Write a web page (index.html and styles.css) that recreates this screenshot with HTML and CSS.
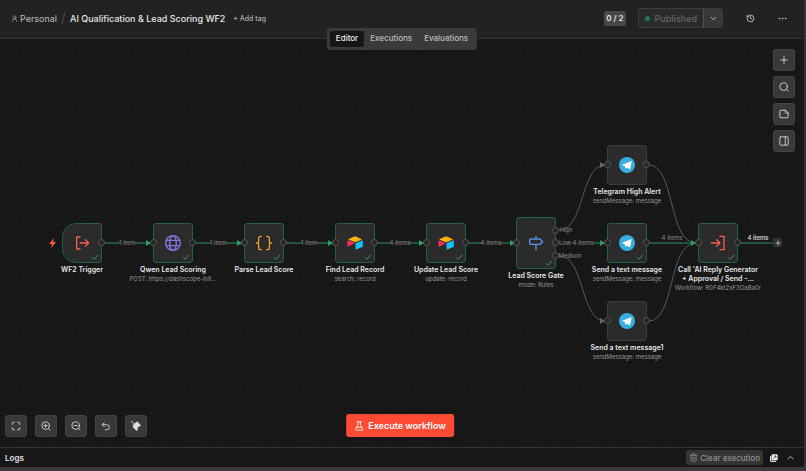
FILE: index.html
```html
<!DOCTYPE html>
<html lang="en">
<head>
  <meta charset="UTF-8" />
  <meta name="viewport" content="width=device-width, initial-scale=1.0" />
  <title>AI Qualification &amp; Lead Scoring WF2</title>
  <link rel="stylesheet" href="styles.css">
</head>
<body>
  <!-- shared icons -->
  <svg class="sprite" aria-hidden="true">
    <symbol id="check" viewBox="0 0 8 8"><path d="M1 4.300 3 6.300 7 2" /></symbol>
    <symbol id="telegram" viewBox="0 0 24 24">
      <circle cx="12" cy="12" r="12" fill="#37aee2" />
      <path d="M4.800 11.800 18 6.400c.7-.2 1.100.1.900 1l-2.200 10.200c-.2.800-.7.900-1.300.6l-3.300-2.500-1.700 1.600c-.4.400-.7.300-.8-.2l-1-3.700-3.700-1.100c-.7-.2-.7-.3-.1-.5z" fill="#fff" />
    </symbol>
    <symbol id="airtable" viewBox="0 0 24 22">
      <path d="M11 1.300 2.500 4.900c-.6.300-.6.900 0 1.100l8.500 3.500c.8.300 1.600.3 2.300 0l8.400-3.500c.6-.2.600-.8 0-1.100L13.200 1.300c-.7-.3-1.500-.3-2.200 0z" fill="#fcb400" />
      <path d="M12.800 11.600V20.200c0 .5.400.8.900.6l9.500-3.800c.3-.1.500-.3.500-.6V7.900c0-.5-.4-.8-.9-.6l-9.500 3.700c-.3.100-.5.300-.5.600z" fill="#18bfff" />
      <path d="M10.800 12 2 16.300c-.6.300-1.400 0-1.400-.6V8c0-.6.600-1 1.200-.7l8.700 3.500c.8.300.9.900.3 1.200z" fill="#f82b60" />
    </symbol>
  </svg>

  <div class="app">
    <header class="header">
      <a class="project" href="#">
        <svg class="icon tiny" viewBox="0 0 24 24"><circle cx="12" cy="8" r="5" /><path d="M4 22a8 8 0 0 1 16 0" /></svg>
        Personal
      </a>
      <span class="slash"></span>
      <h1>AI Qualification &amp; Lead Scoring WF2</h1>
      <button class="add-tag">+ Add tag</button>
      <div class="actions">
        <span class="counter">0 / 2</span>
        <div class="publish">
          <button class="published" disabled><i class="dot"></i>Published</button>
          <button class="publish-more" aria-label="Publish options"><svg class="icon small" viewBox="0 0 24 24"><path d="m6 9 6 6 6-6" /></svg></button>
        </div>
        <button class="plain" aria-label="History"><svg class="icon small" viewBox="0 0 24 24"><path d="M3 12a9 9 0 1 0 9-9 9.700 9.700 0 0 0-6.700 2.700L3 8" /><path d="M3 3v5h5M12 7v5l4 2" /></svg></button>
        <button class="plain" aria-label="More"><svg class="icon small" viewBox="0 0 24 24"><circle cx="4" cy="12" r="1" /><circle cx="12" cy="12" r="1" /><circle cx="20" cy="12" r="1" /></svg></button>
      </div>
      <nav class="tabs">
        <button class="active">Editor</button>
        <button>Executions</button>
        <button>Evaluations</button>
      </nav>
    </header>

    <main class="canvas">
      <div class="flow">
        <svg class="edges" viewBox="0 0 806 408">
          <defs>
            <marker id="arrow" markerUnits="userSpaceOnUse" markerWidth="6" markerHeight="6" refX="5" refY="3" orient="auto"><path d="M0 0 5 3 0 6z" fill="#2da063" /></marker>
            <marker id="arrow-grey" markerUnits="userSpaceOnUse" markerWidth="6" markerHeight="6" refX="5" refY="3" orient="auto"><path d="M0 0 5 3 0 6z" fill="#666" /></marker>
          </defs>
          <g class="idle">
            <path d="M559 191C585 191 580 126 605 126" marker-end="url(#arrow-grey)" />
            <path d="M559 217C585 217 580 282 605 282" marker-end="url(#arrow-grey)" />
            <path d="M649 126C675 126 668 204 696 204" />
            <path d="M649 282C675 282 668 204 696 204" />
          </g>
          <g class="done">
            <path d="M104 204H120M134 204H151" marker-end="url(#arrow)" />
            <path d="M195 204H211M225 204H242" marker-end="url(#arrow)" />
            <path d="M286 204H302M316 204H333" marker-end="url(#arrow)" />
            <path d="M377 204H391M409 204H424" marker-end="url(#arrow)" />
            <path d="M468 204H482M500 204H515" marker-end="url(#arrow)" />
            <path d="M593 204H605" marker-end="url(#arrow)" />
            <path d="M649 204H696" marker-end="url(#arrow)" />
            <path d="M740 204H773" />
          </g>
          <g class="edge-text">
            <text x="127" y="206">1 item</text>
            <text x="218" y="206">1 item</text>
            <text x="309" y="206">1 item</text>
            <text x="400" y="206">4 items</text>
            <text x="491" y="206">4 items</text>
            <text x="583" y="206">4 items</text>
            <text x="566" y="193">High</text>
            <text x="565" y="206">Low</text>
            <text x="570" y="219">Medium</text>
            <text x="672" y="201">4 items</text>
            <text class="bright" x="758" y="201">4 items</text>
          </g>
          <path class="strike" d="M120 204H134M211 204H225M302 204H316M391 204H409M482 204H500M559 204H593M559 191H570M559 217H578" />
          <path class="bolt" d="M54 199 49 205H52L51 209 56 203H53z" />
        </svg>

        <article class="node trigger done-node n1">
          <div class="box">
            <svg class="glyph red" viewBox="0 0 24 24"><path d="M9 3H4v18h5M9 12h13M17 7l5 5-5 5" /></svg>
            <i class="port out"></i><svg class="tick"><use href="#check" /></svg>
          </div>
          <h2>WF2 Trigger</h2>
        </article>

        <article class="node done-node n2">
          <div class="box">
            <svg class="glyph purple" viewBox="0 0 24 24"><circle cx="12" cy="12" r="11" /><ellipse cx="12" cy="12" rx="5" ry="11" /><path d="M2 8h20M2 16h20" /></svg>
            <i class="port in"></i><i class="port out"></i><svg class="tick"><use href="#check" /></svg>
          </div>
          <h2>Qwen Lead Scoring</h2>
          <p>POST: https://dashscope-intl...</p>
        </article>

        <article class="node done-node n3">
          <div class="box">
            <svg class="glyph orange" viewBox="0 0 24 24"><path d="M8 2H7a3 3 0 0 0-3 3v4a3 3 0 0 1-3 3 3 3 0 0 1 3 3v4a3 3 0 0 0 3 3h1M16 2h1a3 3 0 0 1 3 3v4a3 3 0 0 0 3 3 3 3 0 0 0-3 3v4a3 3 0 0 1-3 3h-1" /></svg>
            <i class="port in"></i><i class="port out"></i><svg class="tick"><use href="#check" /></svg>
          </div>
          <h2>Parse Lead Score</h2>
        </article>

        <article class="node done-node n4">
          <div class="box">
            <svg class="glyph"><use href="#airtable" /></svg>
            <i class="port in"></i><i class="port out"></i><svg class="tick"><use href="#check" /></svg>
          </div>
          <h2>Find Lead Record</h2>
          <p>search: record</p>
        </article>

        <article class="node done-node n5">
          <div class="box">
            <svg class="glyph"><use href="#airtable" /></svg>
            <i class="port in"></i><i class="port out"></i><svg class="tick"><use href="#check" /></svg>
          </div>
          <h2>Update Lead Score</h2>
          <p>update: record</p>
        </article>

        <article class="node gate done-node n6">
          <div class="box">
            <svg class="glyph blue" viewBox="0 0 24 24"><path d="M12 2v4M12 14v8M4 6h14l4 4-4 4H4a1.500 1.500 0 0 1-1.500-1.500v-5A1.500 1.500 0 0 1 4 6z" /></svg>
            <i class="port in"></i><i class="port out high"></i><i class="port out"></i><i class="port out medium"></i><svg class="tick"><use href="#check" /></svg>
          </div>
          <h2>Lead Score Gate</h2>
          <p>mode: Rules</p>
        </article>

        <article class="node n7">
          <div class="box">
            <svg class="glyph"><use href="#telegram" /></svg>
            <i class="port in"></i><i class="port out"></i>
          </div>
          <h2>Telegram High Alert</h2>
          <p>sendMessage: message</p>
        </article>

        <article class="node done-node n8">
          <div class="box">
            <svg class="glyph"><use href="#telegram" /></svg>
            <i class="port in"></i><i class="port out"></i><svg class="tick"><use href="#check" /></svg>
          </div>
          <h2>Send a text message</h2>
          <p>sendMessage: message</p>
        </article>

        <article class="node n9">
          <div class="box">
            <svg class="glyph"><use href="#telegram" /></svg>
            <i class="port in"></i><i class="port out"></i>
          </div>
          <h2>Send a text message1</h2>
          <p>sendMessage: message</p>
        </article>

        <article class="node done-node n10">
          <div class="box">
            <svg class="glyph red" viewBox="0 0 24 24"><path d="M15 2h6v20h-6M2 12h13M10 7l5 5-5 5" /></svg>
            <i class="port in"></i><i class="port out"></i><svg class="tick"><use href="#check" /></svg>
          </div>
          <h2>Call 'AI Reply Generator<br>+ Approval / Send -...</h2>
          <p>Workflow: R0F4kt2xF3OaBa0r</p>
        </article>

        <button class="add-next" aria-label="Add next node"><svg class="icon" viewBox="0 0 24 24"><path d="M12 4v16M4 12h16" /></svg></button>
      </div>

      <div class="side-tools">
        <button class="tool" aria-label="Add node"><svg class="icon" viewBox="0 0 24 24"><path d="M12 4v16M4 12h16" /></svg></button>
        <button class="tool" aria-label="Search"><svg class="icon" viewBox="0 0 24 24"><circle cx="11" cy="11" r="9" /><path d="m22 22-4.500-4.500" /></svg></button>
        <button class="tool" aria-label="Add note"><svg class="icon" viewBox="0 0 24 24"><path d="M15 3H4a2 2 0 0 0-2 2v14a2 2 0 0 0 2 2h16a2 2 0 0 0 2-2v-9zM15 3v5a2 2 0 0 0 2 2h5" /></svg></button>
        <button class="tool" aria-label="Toggle panel"><svg class="icon" viewBox="0 0 24 24"><rect x="2" y="2" width="20" height="20" rx="2" /><path d="M15 2v20" /></svg></button>
      </div>

      <div class="bottom-tools">
        <button class="tool" aria-label="Fit view"><svg class="icon" viewBox="0 0 24 24"><path d="M8 3H5a2 2 0 0 0-2 2v3M21 8V5a2 2 0 0 0-2-2h-3M3 16v3a2 2 0 0 0 2 2h3M16 21h3a2 2 0 0 0 2-2v-3" /></svg></button>
        <button class="tool" aria-label="Zoom in"><svg class="icon" viewBox="0 0 24 24"><circle cx="11" cy="11" r="9" /><path d="m22 22-4.500-4.500M11 7v8M7 11h8" /></svg></button>
        <button class="tool" aria-label="Zoom out"><svg class="icon" viewBox="0 0 24 24"><circle cx="11" cy="11" r="9" /><path d="m22 22-4.500-4.500M7 11h8" /></svg></button>
        <button class="tool" aria-label="Undo"><svg class="icon" viewBox="0 0 24 24"><path d="M8 14 3 9l5-5M3 9h11a6 6 0 0 1 0 12h-4" /></svg></button>
        <button class="tool" aria-label="Tidy up"><svg class="icon broom" viewBox="0 0 24 24"><path d="M1 1 9 8M6 9l9-7 8 9-7 3-2 9-8-7z" /></svg></button>
      </div>

      <button class="execute">
        <svg class="icon" viewBox="0 0 24 24"><path d="M7 2h10M9 2v7L3 20a1.500 1.500 0 0 0 1 2h16a1.500 1.500 0 0 0 1-2L15 9V2M6 15h12" /></svg>
        Execute workflow
      </button>
    </main>

    <footer class="logs">
      <h3>Logs</h3>
      <button class="clear"><svg class="icon small" viewBox="0 0 24 24"><path d="M3 6h18M5 6v14a2 2 0 0 0 2 2h10a2 2 0 0 0 2-2V6M8 6V3a1 1 0 0 1 1-1h6a1 1 0 0 1 1 1v3M10 11v6M14 11v6" /></svg>Clear execution</button>
      <button class="plain" aria-label="Pop out"><svg class="popout" viewBox="0 0 24 24"><path d="M2 6v14a2 2 0 0 0 2 2h14" fill="none" stroke="#ddd" stroke-width="4" /><rect x="5" y="1" width="18" height="18" rx="3" fill="#eee" /><path d="m10 14 8-8M12 6h6v6" fill="none" stroke="#222" stroke-width="2" /></svg></button>
      <button class="plain" aria-label="Open logs"><svg class="icon small" viewBox="0 0 24 24"><path d="m5 16 7-7 7 7" /></svg></button>
    </footer>
  </div>
</body>
</html>
```
FILE: styles.css
```css
* { box-sizing: border-box; }
body {
  margin: 0;
  background: #171717;
  color: #e6e6e6;
  font-family: Inter, "Liberation Sans", sans-serif;
  font-size: 9px;
}
h1, h2, h3, p { margin: 0; }
button {
  font: inherit;
  color: inherit;
  padding: 0;
  border: 0;
  background: none;
  cursor: pointer;
}
.sprite {
  position: absolute;
  width: 0;
  height: 0;
}
.app {
  display: flex;
  flex-direction: column;
  height: 100vh;
  border-right: 2px solid #343434;
  border-bottom: 4px solid #3a3a3a;
}
.icon {
  display: block;
  width: 10px;
  height: 10px;
  fill: none;
  stroke: currentColor;
  stroke-width: 2;
  stroke-linecap: round;
  stroke-linejoin: round;
}
.icon.small { width: 9px; height: 9px; }
.icon.tiny { width: 7px; height: 7px; }

/* header */
.header {
  position: relative;
  display: flex;
  align-items: center;
  height: 39px;
  padding: 0 15px 2px 11px;
  background: #222;
  border-bottom: 1px solid #353535;
}
.project {
  display: flex;
  align-items: center;
  gap: 2px;
  color: #bdbdbd;
  text-decoration: none;
}
.slash {
  width: 1px;
  height: 12px;
  margin: 0 6px;
  background: #4a4a4a;
  transform: rotate(15deg);
}
h1 {
  font-size: 9px;
  font-weight: 500;
}
.add-tag {
  margin-left: 8px;
  font-size: 7px;
  font-weight: 500;
  color: #b0b0b0;
}
.actions {
  display: flex;
  align-items: center;
  margin-left: auto;
}
.counter {
  padding: 0 2px;
  line-height: 15px;
  font-size: 8px;
  font-weight: 600;
  background: #484848;
  border-radius: 2px;
}
.publish {
  display: flex;
  height: 20px;
  margin: 0 20px 0 12px;
  border: 1px solid #3c3c3c;
  border-radius: 3px;
  overflow: hidden;
}
.published {
  display: flex;
  align-items: center;
  gap: 5px;
  padding: 0 6px;
  color: #686868;
  font-weight: 500;
  background: #2b2b2b;
  cursor: default;
}
.dot {
  width: 5px;
  height: 5px;
  border-radius: 50%;
  background: #207a4c;
}
.publish-more {
  width: 19px;
  display: grid;
  place-items: center;
  background: #383838;
  border-left: 1px solid #505050;
}
.actions .plain { width: 14px; }
.actions .plain + .plain { margin-left: 18px; }
.plain {
  display: grid;
  place-items: center;
  color: #ddd;
}
.tabs {
  position: absolute;
  top: 28px;
  left: 50%;
  transform: translateX(-50%);
  z-index: 2;
  display: flex;
  padding: 3px;
  background: #3a3a3a;
  border-radius: 3px;
}
.tabs button {
  height: 16px;
  padding: 0 6px 2px;
  border-radius: 2px;
  font-size: 8px;
  font-weight: 500;
  color: #bcbcbc;
}
.tabs .active {
  color: #eee;
  background: #161616;
}

/* canvas */
.canvas {
  position: relative;
  flex: 1;
  overflow: hidden;
  background: #171717 radial-gradient(circle, #1d1d1d 1px, transparent 1px) 0 0 / 7px 7px;
}
.flow {
  position: absolute;
  top: 0;
  left: 0;
  width: 806px;
  height: 408px;
}
.edges {
  display: block;
  width: 806px;
  height: 408px;
}
.edges .idle, .edges .done {
  fill: none;
  stroke: #5a5a5a;
  stroke-width: 1;
}
.edges .done { stroke: #2b935b; }
.edge-text {
  fill: #868686;
  font-size: 6px;
  text-anchor: middle;
}
.edge-text .bright {
  fill: #e0e0e0;
  font-weight: 500;
}
.strike {
  fill: none;
  stroke: #5a5a5a;
  stroke-opacity: 0.5;
}
.bolt { fill: #ff5a45; }
.node {
  position: absolute;
  top: 184px;
  width: 120px;
  margin-left: -60px;
  display: flex;
  flex-direction: column;
  align-items: center;
  text-align: center;
}
.n1 { left: 82px; }
.n2 { left: 173px; }
.n3 { left: 264px; }
.n4 { left: 355px; }
.n5 { left: 446px; }
.n6 { left: 536px; }
.n7 { left: 627px; top: 106px; }
.n8 { left: 627px; }
.n9 { left: 627px; top: 262px; }
.n10 { left: 718px; }
.box {
  position: relative;
  display: grid;
  place-items: center;
  width: 40px;
  height: 40px;
  background: #2b2b2b;
  border: 1px solid #3c3c3c;
  border-radius: 3px;
}
.done-node .box { border-color: #22613f; }
.trigger .box { border-radius: 14px 3px 3px 14px; }
.node.gate { top: 178px; }
.gate .box { height: 52px; }
.node h2 {
  margin-top: 2px;
  font-size: 7px;
  line-height: 9px;
  font-weight: 600;
  white-space: nowrap;
}
.node p {
  font-size: 6px;
  line-height: 9px;
  color: #969696;
  white-space: nowrap;
}
.glyph {
  width: 16px;
  height: 16px;
  fill: none;
  stroke-width: 2;
  stroke-linecap: round;
  stroke-linejoin: round;
}
.red { stroke: #f0614f; }
.purple { stroke: #8277e0; }
.orange { stroke: #f29a2b; }
.blue { stroke: #5b94e6; }
.port {
  position: absolute;
  top: 50%;
  width: 7px;
  height: 7px;
  margin-top: -4px;
  background: #262626;
  border: 1px solid #565656;
  border-radius: 50%;
}
.port.in { left: -4px; }
.port.out { right: -4px; }
.port.high { top: 25%; }
.port.medium { top: 75%; }
.tick {
  position: absolute;
  right: 2px;
  bottom: 1px;
  width: 8px;
  height: 8px;
  fill: none;
  stroke: #2f9a60;
  stroke-width: 1;
}
.add-next {
  position: absolute;
  left: 773px;
  top: 199px;
  width: 9px;
  height: 9px;
  display: grid;
  place-items: center;
  color: #ccc;
  background: #333;
  border-radius: 2px;
}
.add-next .icon { width: 6px; height: 6px; stroke-width: 3; }

/* floating controls */
.tool {
  display: grid;
  place-items: center;
  width: 22px;
  height: 22px;
  color: #dedede;
  background: #393939;
  border: 1px solid #434343;
  border-radius: 3px;
}
.side-tools {
  position: absolute;
  top: 10px;
  right: 9px;
  display: grid;
  gap: 5px;
}
.bottom-tools {
  position: absolute;
  left: 5px;
  bottom: 10px;
  display: flex;
  gap: 8px;
}
.broom { fill: currentColor; }
.execute {
  position: absolute;
  left: 50%;
  bottom: 10px;
  transform: translateX(-50%);
  display: flex;
  align-items: center;
  gap: 4px;
  height: 23px;
  padding: 0 8px;
  margin-left: -2px;
  color: #fff;
  font-weight: 600;
  white-space: nowrap;
  background: #ff4b33;
  border-radius: 3px;
}

/* logs */
.logs {
  display: flex;
  align-items: center;
  gap: 4px;
  height: 20px;
  padding: 0 7px 0 5px;
  background: #171717;
  border-top: 1px solid #333;
}
.logs h3 {
  margin-right: auto;
  font-size: 8px;
  font-weight: 600;
}
.clear {
  display: flex;
  align-items: center;
  gap: 2px;
  height: 15px;
  padding: 0 3px;
  font-size: 8px;
  font-weight: 500;
  color: #929292;
  background: #353535;
  border-radius: 2px;
}
.logs .plain { width: 13px; }
.popout { width: 8px; height: 8px; }
```
